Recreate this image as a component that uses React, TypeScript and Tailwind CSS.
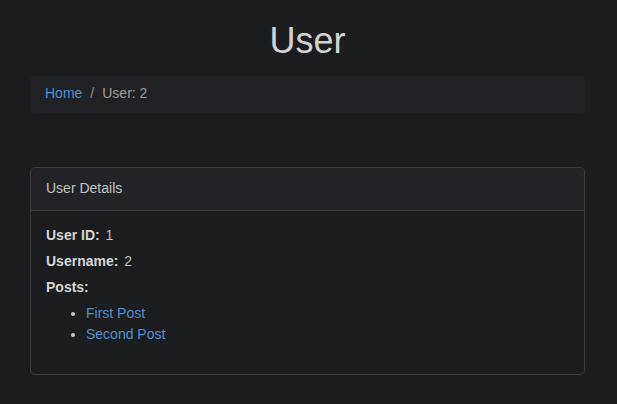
import React from "react";

const posts = [
  { id: 1, title: "First Post" },
  { id: 2, title: "Second Post" },
];

const App = () => {
  return (
    <div className="min-h-[404px] bg-[#1b1c1e] font-['Liberation_Sans',Arial,sans-serif] text-[14px] text-[#c6c6c6]">
      <div className="ml-[30px] mr-[32px] pt-[19px] pb-[29px]">
        <h1 className="text-center text-[36px] leading-[43px] text-[#d2d2d2]">
          User
        </h1>
        <nav className="mt-[14px] rounded-[4px] bg-[#202124] px-[15px] pt-[7px] pb-[9px]">
          <ol className="flex items-center leading-[21px]">
            <li>
              <a href="#" className="text-[#4f8fd0]">
                Home
              </a>
            </li>
            <li className="px-[8px] text-[#8f8f8f]">/</li>
            <li className="text-[#a09a94]">User: 2</li>
          </ol>
        </nav>

        <div className="mt-[54px] rounded-[5px] border border-[#3a3b3e]">
          <div className="rounded-t-[5px] border-b border-[#3a3b3e] bg-[#222326] px-[15px] pt-[9px] pb-[11px] leading-[22px] text-[#c3c3c3]">
            User Details
          </div>
          <div className="flex flex-col gap-[5px] px-[15px] pt-[14px] pb-[29px] leading-[21px]">
            <div>
              <span className="font-bold text-[#d6d6d6]">User ID:</span>{" "}
              <span className="ml-[2px] text-[#c0c0c0]">1</span>
            </div>
            <div>
              <span className="font-bold text-[#d6d6d6]">Username:</span>{" "}
              <span className="ml-[2px] text-[#c0c0c0]">2</span>
            </div>
            <div className="font-bold text-[#d6d6d6]">Posts:</div>
            <ul className="list-disc pl-[40px] text-[#c8c8c8]">
              {posts.map((post) => (
                <li key={post.id}>
                  <a href="#" className="text-[#4f8fd0]">
                    {post.title}
                  </a>
                </li>
              ))}
            </ul>
          </div>
        </div>
      </div>
    </div>
  );
};

export default App;
